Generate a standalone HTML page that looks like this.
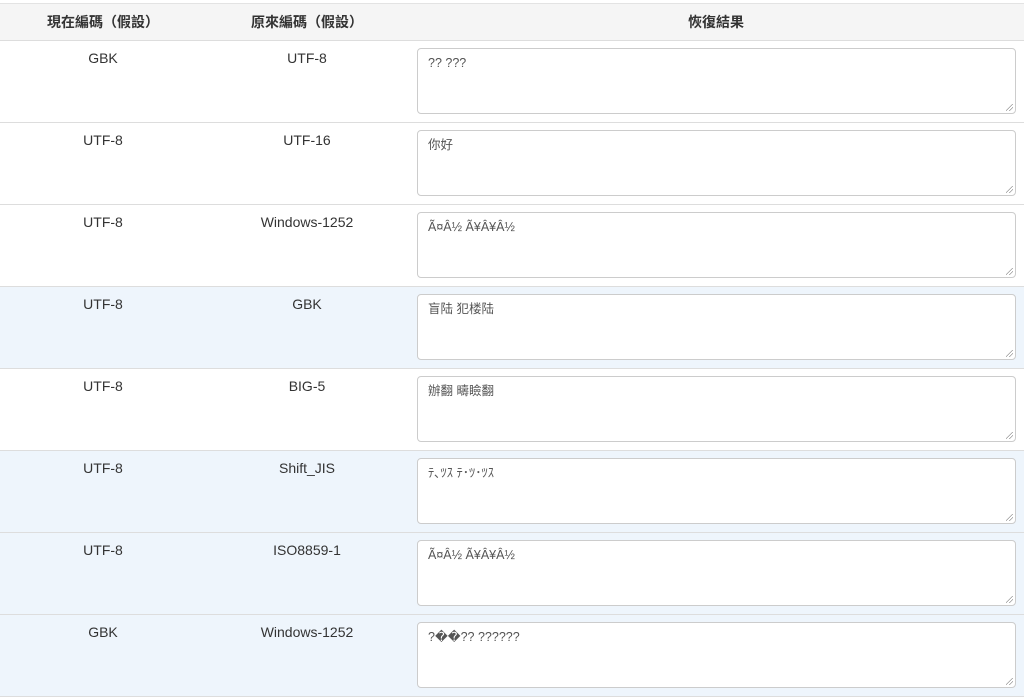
<!DOCTYPE html>
<html><head><meta charset="utf-8"><style>
html,body{margin:0;padding:0;background:#fff;width:1024px;height:695px;overflow:hidden}
body{font-family:"Liberation Sans","Noto Sans CJK TC",sans-serif;font-size:14px;color:#333}
table{border-collapse:collapse;width:1024px;table-layout:fixed;position:absolute;top:3px;left:0}
th{height:36px;background:#f5f5f5;font-weight:bold;text-align:center;border-top:1px solid #e3e3e3;border-bottom:1px solid #ddd;padding:0;font-size:14px}
td{border-bottom:1px solid #ddd;text-align:center;vertical-align:top;padding:0;line-height:16px}
td.t{padding-top:9px;height:72px}
tr.b td{background:#eef5fc}
td.c{padding:7px 8px 0 9px;text-align:left;height:74px}
.ta{box-sizing:border-box;width:599px;height:66px;background:#fff;border:1px solid #ccc;border-radius:4px;padding:6px 10px;font-size:12.5px;color:#555;position:relative}
.ta:after{content:"";position:absolute;right:2px;bottom:2px;width:7px;height:7px;background:linear-gradient(135deg,transparent 45%,#999 45%,#999 52%,transparent 52%,transparent 70%,#999 70%,#999 77%,transparent 77%)}
</style></head><body>
<table>
<colgroup><col style="width:206px"><col style="width:202px"><col style="width:616px"></colgroup>
<tr><th>現在編碼（假設）</th><th>原來編碼（假設）</th><th>恢復結果</th></tr>
<tr><td class="t">GBK</td><td class="t">UTF-8</td><td class="c"><div class="ta">?? ???</div></td></tr>
<tr><td class="t">UTF-8</td><td class="t">UTF-16</td><td class="c"><div class="ta">你好</div></td></tr>
<tr><td class="t">UTF-8</td><td class="t">Windows-1252</td><td class="c"><div class="ta">Ã¤Â½ Ã¥Â¥Â½</div></td></tr>
<tr class="b"><td class="t">UTF-8</td><td class="t">GBK</td><td class="c"><div class="ta">盲陆 犯楼陆</div></td></tr>
<tr><td class="t">UTF-8</td><td class="t">BIG-5</td><td class="c"><div class="ta">辦翻 疇瞼翻</div></td></tr>
<tr class="b"><td class="t">UTF-8</td><td class="t">Shift_JIS</td><td class="c"><div class="ta">ﾃ､ﾂｽ ﾃ･ﾂ･ﾂｽ</div></td></tr>
<tr class="b"><td class="t">UTF-8</td><td class="t">ISO8859-1</td><td class="c"><div class="ta">Ã¤Â½ Ã¥Â¥Â½</div></td></tr>
<tr class="b"><td class="t">GBK</td><td class="t">Windows-1252</td><td class="c"><div class="ta">?��?? ??????</div></td></tr>
</table>
</body></html>
